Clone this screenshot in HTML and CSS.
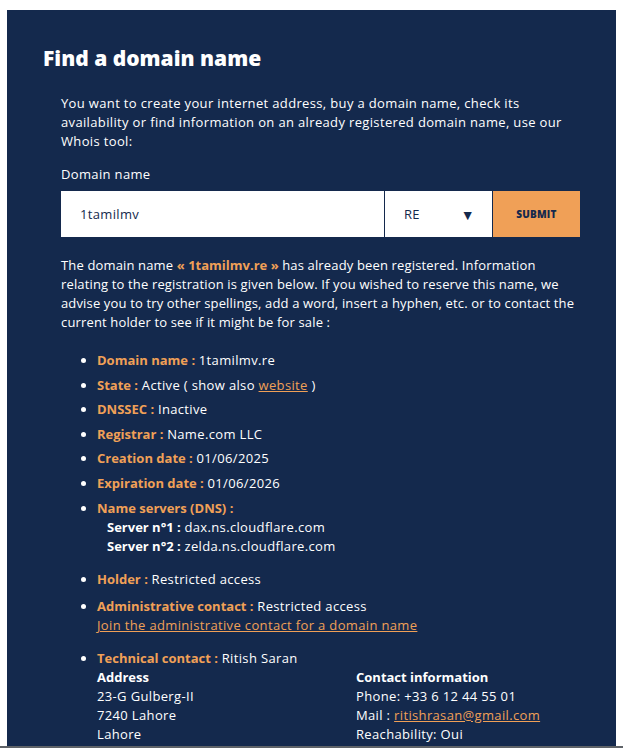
FILE: index.html
```html
<!DOCTYPE html>
<html lang="en">
<head>
<meta charset="utf-8">
<title>Find a domain name</title>
<link rel="stylesheet" href="styles.css">
</head>
<body>
<main class="panel">
  <h1 class="title">Find a domain name</h1>
  <div class="content">
    <p class="intro">You want to create your internet address, buy a domain name, check its availability or find information on an already registered domain name, use our Whois tool:</p>
    <label class="label" for="domain">Domain name</label>
    <form class="search">
      <input id="domain" class="search-input" type="text" value="1tamilmv">
      <div class="search-select"><span>RE</span><span class="caret">▼</span></div>
      <button class="search-btn" type="button">SUBMIT</button>
    </form>
    <p class="result">The domain name <strong class="hl">« 1tamilmv.re »</strong> has already been registered. Information relating to the registration is given below. If you wished to reserve this name, we advise you to try other spellings, add a word, insert a hyphen, etc. or to contact the current holder to see if it might be for sale :</p>
    <ul class="info">
      <li><b class="k">Domain name :</b> 1tamilmv.re</li>
      <li><b class="k">State :</b> Active ( show also <a class="link" href="#">website</a> )</li>
      <li><b class="k">DNSSEC :</b> Inactive</li>
      <li><b class="k">Registrar :</b> Name.com LLC</li>
      <li><b class="k">Creation date :</b> 01/06/2025</li>
      <li><b class="k">Expiration date :</b> 01/06/2026</li>
      <li class="spaced"><b class="k">Name servers (DNS) :</b>
        <div class="servers">
          <div><b>Server n°1 :</b> dax.ns.cloudflare.com</div>
          <div><b>Server n°2 :</b> zelda.ns.cloudflare.com</div>
        </div>
      </li>
      <li class="holder"><b class="k">Holder :</b> Restricted access</li>
      <li class="spaced"><b class="k">Administrative contact :</b> Restricted access<br><a class="link" href="#">Join the administrative contact for a domain name</a></li>
      <li><b class="k">Technical contact :</b> Ritish Saran
        <div class="contact">
          <div>
            <b>Address</b>
            <div>23-G Gulberg-II</div>
            <div>7240 Lahore</div>
            <div>Lahore</div>
          </div>
          <div>
            <b>Contact information</b>
            <div>Phone: +33 6 12 44 55 01</div>
            <div>Mail : <a class="link" href="#">ritishrasan@gmail.com</a></div>
            <div>Reachability: Oui</div>
          </div>
        </div>
      </li>
    </ul>
  </div>
</main>
<div class="rule"></div>
</body>
</html>
```
FILE: styles.css
```css
html, body {
  margin: 0;
  padding: 0;
  background: #ffffff;
}
body {
  padding: 10px 7px 0 7px;
  font-family: "Open Sans", "Liberation Sans", sans-serif;
  font-size: 13px;
  line-height: 19px;
  letter-spacing: 0.35px;
  color: #ffffff;
  overflow: hidden;
}
.panel {
  box-sizing: border-box;
  height: 736px;
  overflow: hidden;
  background: #14294d;
  padding: 33px 35px 0 36px;
}
.rule {
  height: 2px;
  margin: 0 -7px;
  background: #5f6368;
}
b, strong {
  letter-spacing: 0;
}
.title {
  margin: 0 0 21px 0;
  font-size: 21px;
  line-height: 30px;
  font-weight: 800;
  letter-spacing: 0;
}
.content {
  padding: 0 0 0 18px;
}
.intro {
  margin: 0 0 14px 0;
}
.label {
  display: block;
  margin-bottom: 7px;
}
.search {
  display: flex;
  height: 46px;
  margin: 0 0 19px 0;
  gap: 1px;
}
.search-input {
  flex: 0 0 323px;
  box-sizing: border-box;
  border: 0;
  margin: 0;
  padding: 0 19px;
  font: inherit;
  letter-spacing: 0.35px;
  color: #14294d;
  background: #fff;
  outline: none;
}
.search-select {
  flex: 0 0 107px;
  box-sizing: border-box;
  display: flex;
  align-items: center;
  justify-content: space-between;
  padding: 0 17px 0 19px;
  background: #fff;
  color: #14294d;
}
.caret {
  font-size: 14px;
}
.search-btn {
  flex: 0 0 87px;
  border: 0;
  background: #f0a057;
  color: #14294d;
  font: inherit;
  font-size: 10px;
  font-weight: 800;
  letter-spacing: 0.2px;
}
.result {
  margin: 0 0 19px 0;
  letter-spacing: 0.15px;
}
.hl {
  color: #f0a057;
}
.info {
  margin: 0;
  padding: 0 0 0 36px;
}
.info li {
  margin-bottom: 5.6px;
}
.info li.spaced {
  margin-bottom: 14px;
}
.info li.holder {
  margin-bottom: 8px;
}
.k {
  color: #f0a057;
}
.servers {
  padding-left: 10px;
}
.link {
  color: #f0a057;
}
.contact {
  display: grid;
  grid-template-columns: 259px 1fr;
}
```
